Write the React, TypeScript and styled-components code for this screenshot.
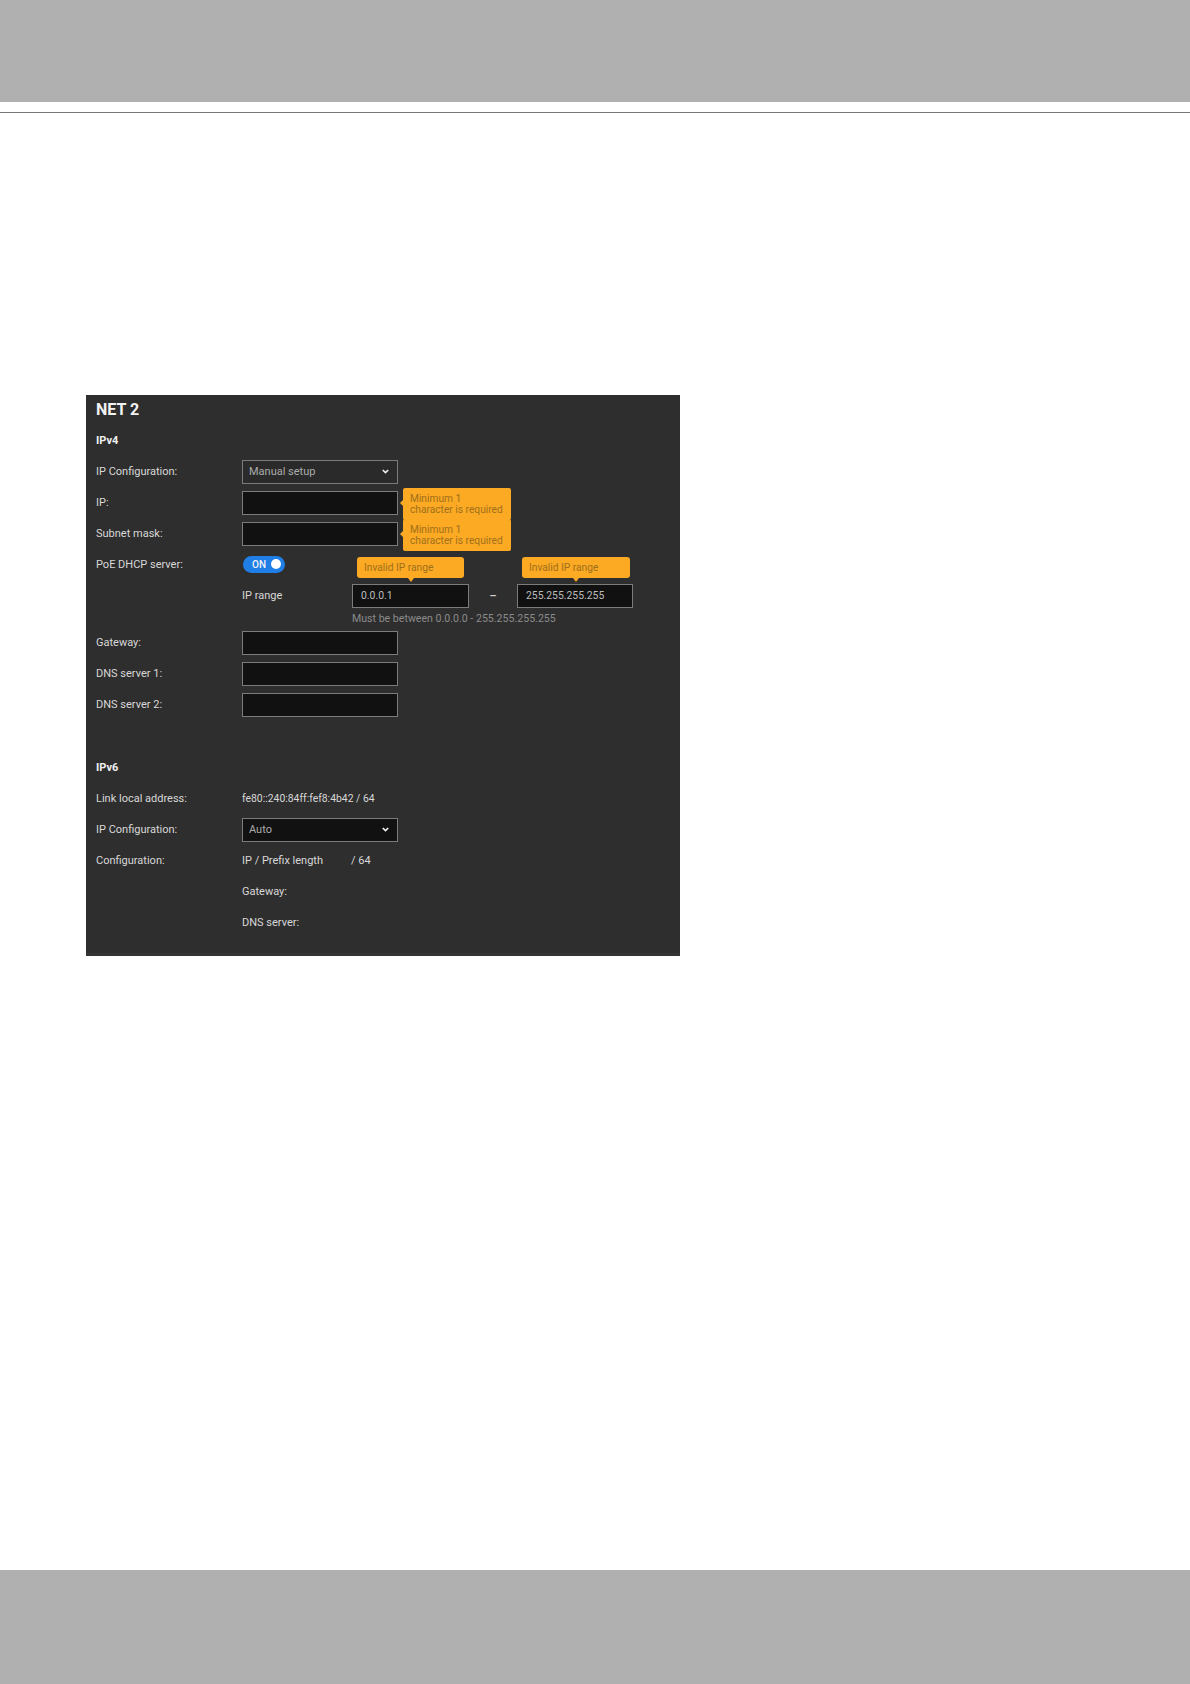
import React from "react";
import styled, { createGlobalStyle } from "styled-components";

const Global = createGlobalStyle`
  html, body { margin: 0; padding: 0; background: #fff; }
  body { font-family: Roboto, "Open Sans", "Liberation Sans", sans-serif; }
`;

const Page = styled.div`
  width: 1190px;
  height: 1684px;
  display: flex;
  flex-direction: column;
`;
const Band = styled.div`
  height: 102px;
  flex: none;
  background: #b0b0b0;
`;
const FootBand = styled(Band)`
  height: 114px;
  margin-top: auto;
`;
const Rule = styled.div`
  height: 1px;
  flex: none;
  margin-top: 10px;
  background: #777777;
`;
const Panel = styled.section`
  width: 594px;
  height: 561px;
  flex: none;
  box-sizing: border-box;
  margin: 282px 0 0 86px;
  padding: 0 0 0 10px;
  background: #2e2e2e;
  color: #dcdcdc;
  font-size: 11px;
  border-bottom: 3px solid #343434;
`;
const Title = styled.h1`
  margin: 0;
  height: 30px;
  line-height: 30px;
  font-size: 16px;
  font-weight: 700;
  color: #f2f2f2;
`;
const Heading = styled.h2<{ $top?: number }>`
  margin: ${(p) => p.$top ?? 0}px 0 0;
  height: 31px;
  line-height: 31px;
  font-size: 11px;
  font-weight: 700;
  color: #f0f0f0;
`;
const Row = styled.div`
  display: grid;
  grid-template-columns: 146px 1fr;
  align-items: center;
  height: 31px;
`;
const Label = styled.div`
  white-space: nowrap;
  color: #d8d8d8;
`;
const Value = styled.div`
  white-space: nowrap;
  color: #d8d8d8;
`;
const AddressValue = styled(Value)`
  font-size: 10.4px;
`;
const PrefixValue = styled(Value)`
  display: flex;
  gap: 28px;
`;
const Field = styled.div`
  position: relative;
  width: 156px;
  height: 24px;
  box-sizing: border-box;
  border: 1px solid #7c7c7c;
  background: #111111;
  display: flex;
  align-items: center;
  padding: 0 6px;
  color: #aaaaaa;
  font-size: 11px;
`;
const SelectField = styled(Field)<{ $dim?: boolean }>`
  justify-content: space-between;
  background: ${(p) => (p.$dim ? "#2a2a2a" : "#111111")};
  padding-right: 8px;
`;
const Chevron = () => (
  <svg width="7" height="5" viewBox="0 0 7 5" fill="none">
    <path d="M.8 1 3.5 3.6 6.2 1" stroke="#f2f2f2" strokeWidth="1.6" />
  </svg>
);
const SideTip = styled.div`
  position: absolute;
  left: 160px;
  top: -4px;
  width: 108px;
  height: 32px;
  box-sizing: border-box;
  padding: 5px 0 0 7px;
  background: #fca924;
  color: #a0701a;
  font-size: 10.2px;
  line-height: 11.5px;
  white-space: nowrap;
  border-radius: 2px;
  z-index: 1;
  &::before {
    content: "";
    position: absolute;
    left: -3px;
    top: 12px;
    border: 3px solid transparent;
    border-left: 0;
    border-right-color: #fca924;
  }
`;
const TopTip = styled.div<{ $width: number }>`
  position: absolute;
  left: 4px;
  top: -28px;
  width: ${(p) => p.$width}px;
  height: 21px;
  box-sizing: border-box;
  padding-left: 7px;
  line-height: 21px;
  background: #fca924;
  color: #a0701a;
  font-size: 10.2px;
  white-space: nowrap;
  border-radius: 3px;
  &::after {
    content: "";
    position: absolute;
    left: 50%;
    margin-left: -3px;
    bottom: -4px;
    border: 3px solid transparent;
    border-bottom: 0;
    border-top: 4px solid #fca924;
  }
`;
const Toggle = styled.div`
  position: relative;
  width: 42px;
  height: 17px;
  margin-left: 1px;
  border-radius: 9px;
  background: #1f7fe6;
  color: #f4f4f4;
  font-size: 10px;
  font-weight: 500;
  line-height: 17px;
  padding-left: 9px;
  box-sizing: border-box;
  &::after {
    content: "";
    position: absolute;
    right: 4px;
    top: 3px;
    width: 10px;
    height: 10px;
    border-radius: 50%;
    background: #fff;
  }
`;
const RangeRow = styled.div`
  display: grid;
  grid-template-columns: 110px 117px 48px 116px;
  align-items: center;
`;
const RangeField = styled(Field)<{ $width: number }>`
  width: ${(p) => p.$width}px;
  padding: 0 8px;
  color: #bcbcbc;
  font-size: 10.4px;
`;
const Dash = styled.div`
  text-align: center;
  color: #d0d0d0;
  font-weight: 700;
`;
const Hint = styled.div`
  height: 16px;
  line-height: 16px;
  margin-left: 256px;
  color: #8b8b8b;
  font-size: 10.6px;
  white-space: nowrap;
`;

const tipText = (
  <>
    Minimum 1
    <br />
    character is required
  </>
);

export default function App() {
  return (
    <Page>
      <Global />
      <Band />
      <Rule />
      <Panel>
        <Title>NET 2</Title>
        <Heading>IPv4</Heading>
        <Row>
          <Label>IP Configuration:</Label>
          <SelectField $dim>
            Manual setup
            <Chevron />
          </SelectField>
        </Row>
        <Row>
          <Label>IP:</Label>
          <Field>
            <SideTip>{tipText}</SideTip>
          </Field>
        </Row>
        <Row>
          <Label>Subnet mask:</Label>
          <Field>
            <SideTip>{tipText}</SideTip>
          </Field>
        </Row>
        <Row>
          <Label>PoE DHCP server:</Label>
          <Toggle>ON</Toggle>
        </Row>
        <Row>
          <div />
          <RangeRow>
            <Value>IP range</Value>
            <RangeField $width={117}>
              0.0.0.1
              <TopTip $width={107}>Invalid IP range</TopTip>
            </RangeField>
            <Dash>–</Dash>
            <RangeField $width={116}>
              255.255.255.255
              <TopTip $width={108}>Invalid IP range</TopTip>
            </RangeField>
          </RangeRow>
        </Row>
        <Hint>Must be between 0.0.0.0 - 255.255.255.255</Hint>
        <Row>
          <Label>Gateway:</Label>
          <Field />
        </Row>
        <Row>
          <Label>DNS server 1:</Label>
          <Field />
        </Row>
        <Row>
          <Label>DNS server 2:</Label>
          <Field />
        </Row>
        <Heading $top={32}>IPv6</Heading>
        <Row>
          <Label>Link local address:</Label>
          <AddressValue>fe80::240:84ff:fef8:4b42 / 64</AddressValue>
        </Row>
        <Row>
          <Label>IP Configuration:</Label>
          <SelectField>
            Auto
            <Chevron />
          </SelectField>
        </Row>
        <Row>
          <Label>Configuration:</Label>
          <PrefixValue>
            <span>IP / Prefix length</span>
            <span>/ 64</span>
          </PrefixValue>
        </Row>
        <Row>
          <div />
          <Value>Gateway:</Value>
        </Row>
        <Row>
          <div />
          <Value>DNS server:</Value>
        </Row>
      </Panel>
      <FootBand />
    </Page>
  );
}
